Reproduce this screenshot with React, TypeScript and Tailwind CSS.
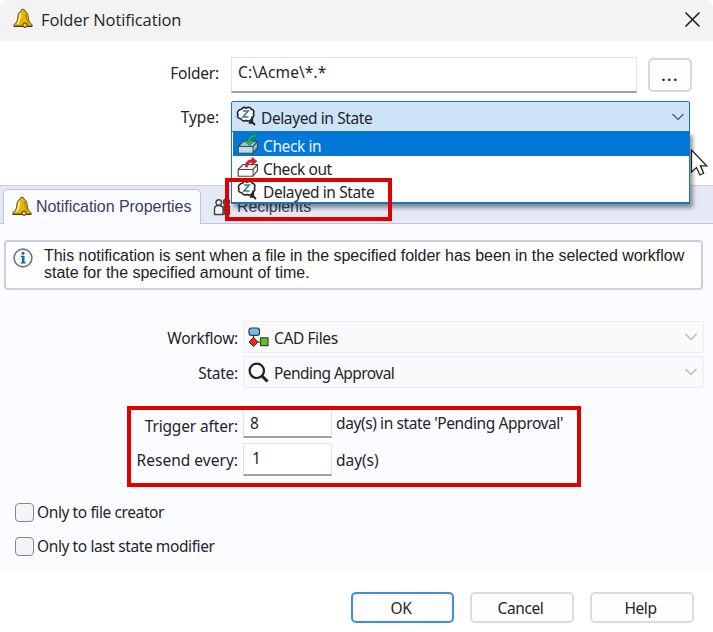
import type { ReactNode } from "react";

const BellIcon = () => (
  <svg width="22" height="22" viewBox="0 0 22 22">
    <path d="M9 3.2a2 2 0 0 1 4 0c2.600 1 3 3.500 3.300 6.600.3 3.200 1.300 5.200 3.900 7v1.700H1.800v-1.700c2.600-1.800 3.600-3.800 3.900-7C6 6.700 6.400 4.200 9 3.200z" fill="#e3b505" stroke="#6a5923" strokeWidth="1" />
    <path d="M8.800 5.500C7.800 8 8 12 5.800 15.500" fill="none" stroke="#fff0a0" strokeWidth="1.700" />
    <path d="M13.500 5.500c.8 4 .8 7 3 9.500" fill="none" stroke="#c28b00" strokeWidth="1.500" />
    <path d="M2 18.300h18" stroke="#3d3520" strokeWidth="1.300" />
    <circle cx="13" cy="17.200" r="2.200" fill="#f5cf3a" stroke="#3d3520" />
  </svg>
);

const DelayedIcon = () => (
  <svg width="21" height="21" viewBox="0 0 21 21" fill="none">
    <path d="M5.500 3.200C6.500.8 9 1 10 2.200c2-1.500 4.800-1 5.500 1.200 2.500.3 2.800 2.800 1.900 4.400 1 2-.2 3.800-1.600 4.400-.8 2.700-3.600 3.400-5.600 2.300-2 1-4.500.4-5.300-1.700C2.200 12.600.8 10.600 2 8.600.5 6.500 2.500 3.200 5.500 3.200z" fill="#fff" stroke="#252525" strokeWidth="1.600" />
    <path d="M7 5h5.200L7 11h5.500" stroke="#2e818a" strokeWidth="1.600" />
    <path d="M16.200 10.500v6.200h-3.500M14.500 14.500l4.500 4.500" stroke="#252525" strokeWidth="1.900" />
  </svg>
);

const CheckIcon = ({ out = false }: { out?: boolean }) => (
  <svg width="22" height="21" viewBox="0 0 22 21" fill="none">
    <path d="M1.200 12.500L6 7.500h14.500v6l-4.500 5.700H1.200z" fill={out ? "#f5f5f5" : "#8dc5dc"} stroke="#4a4a4a" strokeWidth="1.200" />
    <path d="M1.200 12.500H16l4.500-5M16 12.500v6.500" stroke="#4a4a4a" strokeWidth="1.200" />
    <path d="M2 13.200h13.300v5.300H2z" fill={out ? "#fff" : "#b7dcea"} />
    {out ? (
      <path d="M8.500 10C8 5.500 10.500 2.700 15 2.700V.3l5 4-5 4V5.500c-3 0-4.500 1-4.500 4.500z" fill="#e21b24" stroke="#ad1519" strokeWidth=".5" />
    ) : (
      <path d="M19.500.5c-5.500 0-8.500 2-8.500 6H7.800l4.700 5.300 4.700-5.300h-3.400c0-2.200 2-3.500 5.700-3.700z" fill="#25ad62" stroke="#08763b" strokeWidth=".6" />
    )}
  </svg>
);

const InfoIcon = () => (
  <svg width="20" height="20" viewBox="0 0 20 20">
    <circle cx="10" cy="10" r="8.900" fill="#f7f9fb" stroke="#777" strokeWidth="1.600" />
    <circle cx="10" cy="5.200" r="1.500" fill="#176c96" />
    <path d="M7.800 8.300h3.400M7.800 14.800h5" fill="none" stroke="#176c96" strokeWidth="1.200" />
    <path d="M10.200 8v7" stroke="#176c96" strokeWidth="2.600" />
  </svg>
);

const WorkflowIcon = () => (
  <svg width="21" height="20" viewBox="0 0 21 20">
    <path d="M5.500 8v7H13" fill="none" stroke="#333" strokeWidth="1.200" />
    <rect x="1" y="1" width="10.500" height="7.300" rx="2.400" fill="#78bce5" stroke="#243f52" strokeWidth="1.200" />
    <path d="M5.500 10.300L10 15l-4.500 4.500L1 15z" fill="#e12c16" stroke="#811808" />
    <rect x="12.500" y="10.800" width="7.500" height="7.800" fill="#73b82a" stroke="#2c5216" strokeWidth="1.200" />
  </svg>
);

const SearchIcon = () => (
  <svg width="21" height="21" viewBox="0 0 21 21" fill="none">
    <circle cx="8.800" cy="8.800" r="7.200" stroke="#222" strokeWidth="2.200" />
    <path d="M14 14l5.500 5.500" stroke="#222" strokeWidth="3" />
  </svg>
);

const PeopleIcon = () => (
  <svg width="19" height="20" viewBox="0 0 19 20" fill="none" stroke="#444" strokeWidth="1.400">
    <circle cx="13.500" cy="5" r="3" fill="#555" />
    <path d="M11 17V9h5.500v8z" fill="#555" />
    <circle cx="5.800" cy="5.500" r="2.800" fill="#f6f6fa" />
    <path d="M1.500 17.500V12c0-2.500 1.700-3.500 4.300-3.500s4.200 1 4.200 3.500v5.500z" fill="#f6f6fa" />
  </svg>
);

const Chevron = ({ color }: { color: string }) => (
  <svg className="ml-auto" width="14" height="8" viewBox="0 0 14 8" fill="none">
    <path d="M1.500 1L7 6.500 12.500 1" stroke={color} strokeWidth="1.500" />
  </svg>
);

const Label = ({ children }: { children: ReactNode }) => (
  <div className="w-[238px] shrink-0 pt-[2px] text-right tracking-[-0.25px]">{children}</div>
);

const Field = ({ value, className }: { value: string; className: string }) => (
  <div className={"border border-[#e4e4e7] border-b-2 border-b-[#a0a0a3] bg-white " + className}>{value}</div>
);

const Check = ({ label }: { label: string }) => (
  <div className="flex h-[34px] items-center">
    <span className="h-[19px] w-[19px] rounded-[4px] border-[1.5px] border-[#88888b] bg-[#f4f4f6]" />
    <span className="ml-[3px]">{label}</span>
  </div>
);

const App = () => {
  return (
    <div className="relative h-[632px] w-[713px] overflow-hidden bg-white font-['Noto_Sans',sans-serif] text-[15.5px] leading-5 tracking-[-0.4px] whitespace-nowrap text-[#252529]">
      {/* Title bar */}
      <header className="flex h-[41px] items-center rounded-t-lg bg-[#f3f3f3] pr-[12px] pb-[3px] pl-[12px]">
        <BellIcon />
        <h1 className="mt-px ml-[7px] font-['Open_Sans',sans-serif] text-[16.5px] tracking-[-0.1px]">Folder Notification</h1>
        <svg className="ml-auto" width="17" height="17" viewBox="0 0 17 17">
          <path d="M1.500 1.500l14 14M15.500 1.500l-14 14" stroke="#222" strokeWidth="1.600" />
        </svg>
      </header>

      {/* Folder and type */}
      <section className="h-[144px] pt-[16px]">
        <div className="flex h-[36px]">
          <div className="w-[219px] pt-[6px] text-right tracking-[-0.2px]">Folder:</div>
          <Field value="C:\Acme\*.*" className="ml-[12px] w-[406px] pt-[4px] pl-[6px] tracking-[0.1px]" />
          <button className="mt-px ml-[11px] h-[34px] w-[44px] rounded-[5px] border-2 border-[#d8d8d8] bg-[#fefefe] pb-px text-[16px] font-semibold tracking-[1.4px]">...</button>
        </div>
        <div className="mt-[8px] flex">
          <div className="w-[219px] pt-[6px] text-right tracking-[-0.1px]">Type:</div>
          <div className="relative ml-[12px] w-[459px]">
            <div className="flex h-[31px] items-center rounded-t-[2px] border border-[#1877c2] bg-[#cde4f8] pr-[4px] pl-[4px]">
              <DelayedIcon />
              <span className="mt-[2px] ml-[4px]">Delayed in State</span>
              <Chevron color="#59656e" />
            </div>
            <div className="absolute top-[30px] left-0 z-10 h-[73px] w-[459px] border border-b-2 border-[#1777bd] bg-white pl-px shadow-[3px_4px_4px_rgba(0,0,0,0.4)]">
              <div className="flex h-[24px] items-center bg-[#0078d7] pl-[4px] text-[#e8f4ff]"><CheckIcon /><span className="mt-[4px] ml-[4px]">Check in</span></div>
              <div className="flex h-[23px] items-center pl-[4px]"><CheckIcon out /><span className="mt-[3px] ml-[4px]">Check out</span></div>
              <div className="flex h-[23px] items-center pl-[4px]"><DelayedIcon /><span className="mt-[2px] ml-[5px]">Delayed in State</span></div>
            </div>
          </div>
        </div>
      </section>

      {/* Tabs */}
      <nav className="flex h-[39px] border-t border-b border-t-[#cdd0db] border-b-[#c3c3d4] bg-[#e4e9f5] pl-[3px] font-['Liberation_Sans',sans-serif] text-[16px] tracking-[-0.05px] text-[#39405f]">
        <div className="relative mt-[3px] flex h-[35px] w-[198px] items-center rounded-t-[5px] border border-b-0 border-[#c3c3d8] bg-[#fbfcff] pb-px pl-[7px]">
          <BellIcon />
          <span className="ml-[3px]">Notification Properties</span>
        </div>
        <div className="flex items-center pt-[5px] pl-[12px]">
          <PeopleIcon />
          <span className="ml-[5px]">Recipients</span>
        </div>
      </nav>

      <main className="h-[347px] bg-[#fbfcff] pt-[16px]">
        <div className="ml-[4px] flex h-[50px] w-[699px] rounded-[4px] border-2 border-[#cdcde4] bg-[#fefeff] pt-[6px] pl-[7px] font-['Liberation_Sans',sans-serif] text-[16px] leading-[17px] tracking-[-0.03px] text-[#222]">
          <InfoIcon />
          <p className="-mt-px ml-[11px]">
            This notification is sent when a file in the specified folder has been in the selected workflow
            <br />
            state for the specified amount of time.
          </p>
        </div>

        <div className="mt-[31px] flex h-[32px] items-center">
          <Label>Workflow:</Label>
          <div className="ml-[5px] flex h-[32px] w-[461px] items-center rounded-[2px] border border-[#ededf0] bg-[#fafafc] pr-[5px] pl-[4px]">
            <WorkflowIcon /><span className="mt-[2px] ml-[5px]">CAD Files</span><Chevron color="#bdbdc2" />
          </div>
        </div>
        <div className="mt-[3px] flex h-[32px] items-center">
          <Label>State:</Label>
          <div className="ml-[5px] flex h-[32px] w-[461px] items-center rounded-[2px] border border-[#ededf0] bg-[#fafafc] pr-[5px] pl-[4px]">
            <SearchIcon /><span className="mt-[2px] ml-[5px] tracking-[-0.55px]">Pending Approval</span><Chevron color="#bdbdc2" />
          </div>
        </div>

        <div className="mt-[18px] flex h-[32px]">
          <div className="w-[238px] pt-[10px] text-right tracking-[-0.15px]">Trigger after:</div>
          <Field value="8" className="ml-[5px] w-[89px] pt-[6px] pl-[6px]" />
          <span className="ml-[4px] pt-[7px]">day(s) in state 'Pending Approval'</span>
        </div>
        <div className="mt-[5px] flex h-[33px]">
          <div className="w-[238px] pt-[7px] text-right tracking-[0.02px]">Resend every:</div>
          <Field value="1" className="ml-[5px] w-[89px] pt-[4px] pl-[8px]" />
          <span className="ml-[4px] pt-[7px] tracking-[-0.05px]">day(s)</span>
        </div>

        <div className="mt-[19px] ml-[15px]">
          <Check label="Only to file creator" />
          <Check label="Only to last state modifier" />
        </div>
      </main>

      <footer className="flex gap-[16px] pt-[21px] pl-[351px]">
        <button className="h-[31px] w-[103px] rounded-[5px] border-2 border-[#3991d1] bg-[#fdfdfe] pr-[3px]">OK</button>
        <button className="h-[31px] w-[104px] rounded-[5px] border-2 border-[#dcdce0] bg-[#fefefe] pr-[3px]">Cancel</button>
        <button className="h-[31px] w-[104px] rounded-[5px] border-2 border-[#dcdce0] bg-[#fefefe] pr-[3px]">Help</button>
      </footer>

      {/* Highlights and pointer over the dialog */}
      <div className="absolute top-[178px] left-[225px] z-20 h-[43px] w-[167px] border-4 border-[#e00000]" />
      <div className="absolute top-[406px] left-[127px] z-20 h-[81px] w-[454px] border-4 border-[#e00000]" />
      <svg className="absolute top-[149px] left-[690px] z-30" width="18" height="28" viewBox="0 0 18 28">
        <path d="M1.500 1v22l5-4.500 3.500 7.500 3.700-1.700-3.300-7.500h6.300z" fill="#fff" stroke="#222" strokeWidth="1.300" />
      </svg>
    </div>
  );
};

export default App;
